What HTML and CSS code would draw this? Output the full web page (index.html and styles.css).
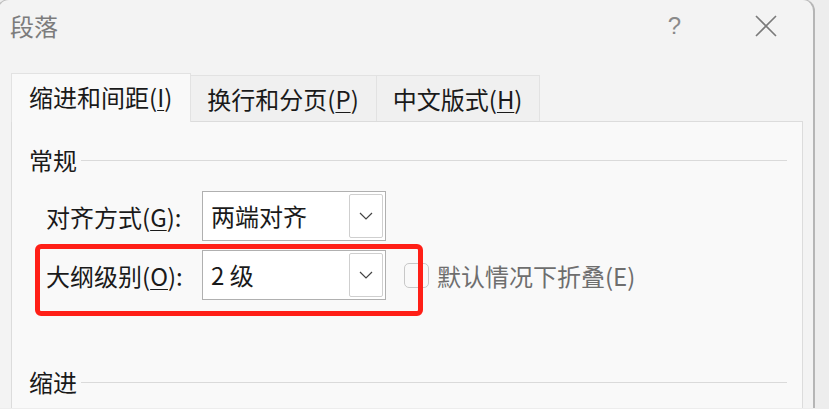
FILE: index.html
```html
<!DOCTYPE html>
<html lang="zh-CN">
<head>
    <meta charset="UTF-8">
    <meta name="viewport" content="width=device-width, initial-scale=1.0">
    <title>段落</title>
    <link rel="stylesheet" href="styles.css">
</head>
<body>
    <div class="window">
        <div class="titlebar">
            <span class="title">段落</span>
            <span class="help">?</span>
            <span class="close">
                <svg width="22" height="22" viewBox="0 0 22 22">
                    <path d="M1 1 L21 21 M21 1 L1 21" stroke="#7a7a7a" stroke-width="1.6" fill="none"/>
                </svg>
            </span>
        </div>

        <div class="tabs">
            <div class="tab active">缩进和间距(<u>I</u>)</div>
            <div class="tab">换行和分页(<u>P</u>)</div>
            <div class="tab">中文版式(<u>H</u>)</div>
        </div>

        <div class="panel">
            <div class="group-title">
                <span>常规</span>
                <div class="rule"></div>
            </div>

            <div class="form-row">
                <label class="label">对齐方式(<u>G</u>):</label>
                <div class="select">
                    <span class="value">两端对齐</span>
                    <span class="drop">
                        <svg width="14" height="8" viewBox="0 0 14 8"><path d="M1 1 L7 7 L13 1" stroke="#444" stroke-width="1.2" fill="none"/></svg>
                    </span>
                </div>
            </div>

            <div class="form-row second">
                <div class="highlight"></div>
                <label class="label">大纲级别(<u>O</u>):</label>
                <div class="select">
                    <span class="value">2 级</span>
                    <span class="drop">
                        <svg width="14" height="8" viewBox="0 0 14 8"><path d="M1 1 L7 7 L13 1" stroke="#444" stroke-width="1.2" fill="none"/></svg>
                    </span>
                </div>
                <span class="checkbox"></span>
                <span class="check-label">默认情况下折叠(E)</span>
            </div>

            <div class="group-title indent">
                <span>缩进</span>
                <div class="rule"></div>
            </div>
        </div>
    </div>
</body>
</html>
```

FILE: styles.css
```css
html, body {
    height: 100%;
}
body {
    margin: 0;
    background-color: #ededed;
    font-family: "Noto Sans CJK SC", "Microsoft YaHei", sans-serif;
    font-size: 24px;
    color: #1a1a1a;
    overflow: hidden;
}
.window {
    width: 818px;
    height: 100%;
    margin: -1px 0 0 -3px;
    background-color: #f3f3f3;
    border: 1px solid #bdbdbd;
    border-right: 2px solid #b5b5b5;
    border-bottom: none;
    border-radius: 12px 12px 0 0;
    box-sizing: border-box;
    overflow: hidden;
}
.titlebar {
    display: flex;
    align-items: center;
    height: 52px;
    padding: 0 0 0 12px;
}
.title {
    color: #7c7c7c;
    line-height: 30px;
    flex: 1;
}
.help {
    color: #8a8a8a;
    font-family: "Liberation Sans", sans-serif;
    font-size: 24px;
    margin-right: 74px;
}
.close {
    display: flex;
    margin-right: 36px;
}
.tabs {
    display: flex;
    align-items: flex-end;
    padding: 0 0 0 13px;
    height: 48px;
    margin-top: 21px;
}
.tab {
    height: 46px;
    line-height: 46px;
    padding: 0 17px 0 16px;
    background-color: #f0f0f0;
    border: 1px solid #e2e2e2;
    border-bottom: none;
    border-left: none;
    box-sizing: border-box;
}
.tab.active {
    height: 49px;
    padding: 0 18px 0 17px;
    background-color: #f9f9f9;
    border-left: 1px solid #e2e2e2;
    margin-bottom: -1px;
    position: relative;
}
u {
    text-underline-offset: 3px;
    text-decoration-thickness: 1px;
}
.panel {
    margin: 0 0 0 13px;
    width: 792px;
    height: 300px;
    background-color: #f9f9f9;
    border: 1px solid #dcdcdc;
    box-sizing: border-box;
    padding: 23px 15px 0 17px;
}
.group-title {
    display: flex;
    align-items: center;
    line-height: 30px;
    gap: 4px;
}
.rule {
    flex: 1;
    height: 1px;
    margin-top: 1px;
    background-color: #dadada;
}
.group-title.indent {
    margin-top: 67px;
}
.form-row {
    display: flex;
    align-items: center;
    margin-left: 17px;
    margin-top: 16px;
    height: 50px;
}
.form-row.second {
    margin-top: 9px;
    position: relative;
}
.label {
    width: 156px;
}
.select {
    display: flex;
    align-items: center;
    justify-content: space-between;
    width: 184px;
    height: 50px;
    background-color: #fff;
    border: 1px solid #b0b0b0;
    box-sizing: border-box;
    padding: 2px 2px 2px 8px;
}
.value {
    line-height: 30px;
}
.drop {
    display: flex;
    align-items: center;
    justify-content: center;
    width: 34px;
    height: 100%;
    border: 1px solid #cfcfcf;
    border-radius: 2px;
    box-sizing: border-box;
}
.checkbox {
    width: 25px;
    height: 25px;
    margin-left: 18px;
    border: 1.5px solid #c8c8c8;
    border-radius: 5px;
    box-sizing: border-box;
}
.check-label {
    color: #6e6e6e;
    margin-left: 8px;
}
.highlight {
    position: absolute;
    left: -11px;
    top: -6px;
    width: 388px;
    height: 72px;
    border: 5px solid #ff1f17;
    border-radius: 6px;
    box-sizing: border-box;
}
```
